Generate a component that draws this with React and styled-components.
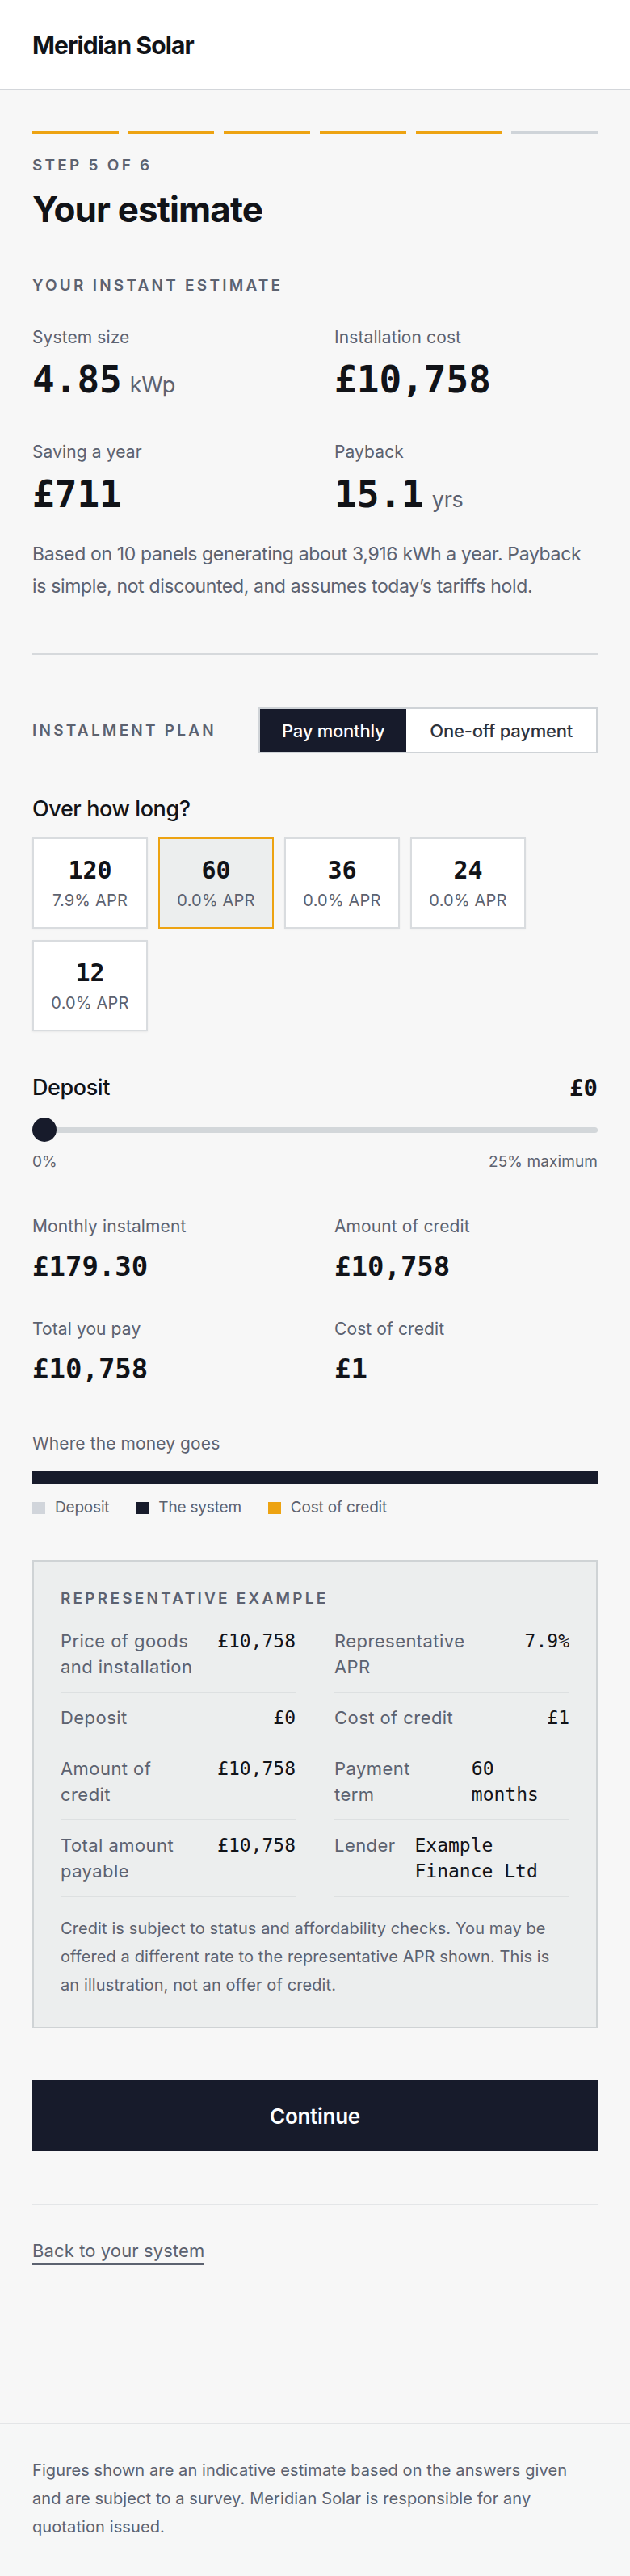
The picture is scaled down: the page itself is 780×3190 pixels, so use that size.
import React from 'react';
import styled, { createGlobalStyle } from 'styled-components';

const ink = '#171b2b';
const muted = '#5c6270';
const amber = '#eda312';
const sans = '"Inter", "Liberation Sans", sans-serif';
const mono = '"DejaVu Sans Mono", "Liberation Mono", monospace';

const GlobalStyle = createGlobalStyle`
  body {
    margin: 0;
    background: #f7f7f7;
    font-family: ${sans};
    color: ${ink};
  }
  * { box-sizing: border-box; }
`;

const terms = [
  { months: 120, apr: '7.9% APR' },
  { months: 60, apr: '0.0% APR', active: true },
  { months: 36, apr: '0.0% APR' },
  { months: 24, apr: '0.0% APR' },
  { months: 12, apr: '0.0% APR' },
];

const App = () => {
  return (
    <Page>
      <GlobalStyle />
      <Header>
        <Brand>Meridian Solar</Brand>
      </Header>

      <Main>
        <Progress>
          {[1, 2, 3, 4, 5, 6].map((n) => (
            <Segment key={n} done={n <= 5} />
          ))}
        </Progress>
        <Eyebrow>Step 5 of 6</Eyebrow>
        <Title>Your estimate</Title>

        <Eyebrow top={58}>Your instant estimate</Eyebrow>
        <StatGrid top={39} rowGap={50}>
          <Stat>
            <StatLabel>System size</StatLabel>
            <BigValue>4.85<Unit>kWp</Unit></BigValue>
          </Stat>
          <Stat>
            <StatLabel>Installation cost</StatLabel>
            <BigValue>£10,758</BigValue>
          </Stat>
          <Stat>
            <StatLabel>Saving a year</StatLabel>
            <BigValue>£711</BigValue>
          </Stat>
          <Stat>
            <StatLabel>Payback</StatLabel>
            <BigValue>15.1<Unit>yrs</Unit></BigValue>
          </Stat>
        </StatGrid>
        <Lead>
          Based on 10 panels generating about 3,916 kWh a year. Payback is simple, not
          discounted, and assumes today’s tariffs hold.
        </Lead>

        <Rule top={63} />

        <PlanRow>
          <Eyebrow top={0}>Instalment plan</Eyebrow>
          <Toggle>
            <ToggleButton active>Pay monthly</ToggleButton>
            <ToggleButton>One-off payment</ToggleButton>
          </Toggle>
        </PlanRow>

        <Question top={52}>Over how long?</Question>
        <Terms>
          {terms.map((t) => (
            <TermCard key={t.months} active={t.active}>
              <TermMonths>{t.months}</TermMonths>
              <TermApr>{t.apr}</TermApr>
            </TermCard>
          ))}
        </Terms>

        <DepositHead>
          <Question top={0}>Deposit</Question>
          <DepositValue>£0</DepositValue>
        </DepositHead>
        <Slider>
          <Track />
          <Thumb />
        </Slider>
        <SliderScale>
          <span>0%</span>
          <span>25% maximum</span>
        </SliderScale>

        <StatGrid top={54} rowGap={44}>
          <Stat gap={15}>
            <StatLabel>Monthly instalment</StatLabel>
            <MidValue>£179.30</MidValue>
          </Stat>
          <Stat gap={15}>
            <StatLabel>Amount of credit</StatLabel>
            <MidValue>£10,758</MidValue>
          </Stat>
          <Stat gap={15}>
            <StatLabel>Total you pay</StatLabel>
            <MidValue>£10,758</MidValue>
          </Stat>
          <Stat gap={15}>
            <StatLabel>Cost of credit</StatLabel>
            <MidValue>£1</MidValue>
          </Stat>
        </StatGrid>

        <StatLabel top={59}>Where the money goes</StatLabel>
        <MoneyBar>
          <BarPart color="#d1d5db" style={{ width: '0%' }} />
          <BarPart color={ink} style={{ width: '99.99%' }} />
          <BarPart color={amber} style={{ width: '0.01%' }} />
        </MoneyBar>
        <Legend>
          <LegendItem><Swatch color="#d1d5db" />Deposit</LegendItem>
          <LegendItem><Swatch color={ink} />The system</LegendItem>
          <LegendItem><Swatch color={amber} />Cost of credit</LegendItem>
        </Legend>

        <ExampleBox>
          <Eyebrow top={0}>Representative example</Eyebrow>
          <ExampleGrid>
            <ExampleRow>
              <ExLabel>Price of goods and installation</ExLabel>
              <ExValue>£10,758</ExValue>
            </ExampleRow>
            <ExampleRow>
              <ExLabel>Representative APR</ExLabel>
              <ExValue>7.9%</ExValue>
            </ExampleRow>
            <ExampleRow>
              <ExLabel>Deposit</ExLabel>
              <ExValue>£0</ExValue>
            </ExampleRow>
            <ExampleRow>
              <ExLabel>Cost of credit</ExLabel>
              <ExValue>£1</ExValue>
            </ExampleRow>
            <ExampleRow>
              <ExLabel>Amount of credit</ExLabel>
              <ExValue>£10,758</ExValue>
            </ExampleRow>
            <ExampleRow>
              <ExLabel>Payment term</ExLabel>
              <ExValue>60 months</ExValue>
            </ExampleRow>
            <ExampleRow>
              <ExLabel>Total amount payable</ExLabel>
              <ExValue>£10,758</ExValue>
            </ExampleRow>
            <ExampleRow>
              <ExLabel>Lender</ExLabel>
              <ExValue>Example Finance Ltd</ExValue>
            </ExampleRow>
          </ExampleGrid>
          <SmallPrint top={22}>
            Credit is subject to status and affordability checks. You may be offered a
            different rate to the representative APR shown. This is an illustration, not an
            offer of credit.
          </SmallPrint>
        </ExampleBox>

        <PrimaryButton>Continue</PrimaryButton>
        <Rule top={65} light />
        <BackLink href="#">Back to your system</BackLink>
      </Main>

      <Footer>
        <SmallPrint top={0}>
          Figures shown are an indicative estimate based on the answers given and are
          subject to a survey. Meridian Solar is responsible for any quotation issued.
        </SmallPrint>
      </Footer>
    </Page>
  );
};

export default App;

// LAYOUT
const Page = styled.div`
  min-height: 3190px;
  display: flex;
  flex-direction: column;
`;

const Header = styled.header`
  height: 112px;
  background: #fff;
  border-bottom: 2px solid #d3d6da;
  display: flex;
  align-items: center;
  padding: 2px 40px 0;
`;

const Brand = styled.div`
  font-size: 30px;
  font-weight: 700;
  letter-spacing: -0.03em;
  color: #111318;
`;

const Main = styled.main`
  padding: 50px 40px 190px;
  flex: 1;
`;

const Progress = styled.div`
  display: grid;
  grid-template-columns: repeat(6, 1fr);
  gap: 12px;
  margin-bottom: 28px;
`;

const Segment = styled.div`
  height: 4px;
  background: ${(p) => (p.done ? amber : '#cfd4d9')};
`;

const Eyebrow = styled.div`
  margin-top: ${(p) => p.top || 0}px;
  font-size: 19px;
  line-height: 22px;
  font-weight: 600;
  letter-spacing: 0.17em;
  text-transform: uppercase;
  color: ${muted};
`;

const Title = styled.h1`
  margin: 17px 0 0;
  font-size: 44px;
  line-height: 52px;
  font-weight: 700;
  letter-spacing: -0.02em;
  color: #111318;
`;

// STATS
const StatGrid = styled.div`
  margin-top: ${(p) => p.top}px;
  display: grid;
  grid-template-columns: 1fr 1fr;
  column-gap: 48px;
  row-gap: ${(p) => p.rowGap}px;
`;

const Stat = styled.div`
  display: flex;
  flex-direction: column;
  gap: ${(p) => p.gap || 12}px;
`;

const StatLabel = styled.div`
  margin-top: ${(p) => p.top || 0}px;
  font-size: 21px;
  line-height: 28px;
  color: ${muted};
  letter-spacing: 0.005em;
`;

const BigValue = styled.div`
  font-family: ${mono};
  font-size: 46px;
  line-height: 52px;
  height: 52px;
  font-weight: 700;
  color: #111318;
  white-space: nowrap;
`;

const Unit = styled.span`
  font-family: ${sans};
  font-size: 27px;
  line-height: 1;
  font-weight: 400;
  color: ${muted};
  margin-left: 10px;
  letter-spacing: -0.01em;
`;

const MidValue = styled.div`
  font-family: ${mono};
  font-size: 34px;
  line-height: 40px;
  font-weight: 700;
  color: #111318;
`;

const Lead = styled.p`
  margin: 28px 0 0;
  font-size: 23px;
  line-height: 40px;
  color: ${muted};
  letter-spacing: -0.015em;
`;

const Rule = styled.hr`
  margin: ${(p) => p.top}px 0 0;
  border: 0;
  height: 2px;
  background: ${(p) => (p.light ? '#e4e6e8' : '#d6d9dc')};
`;

// PLAN
const PlanRow = styled.div`
  margin-top: 65px;
  display: flex;
  align-items: center;
  justify-content: space-between;
`;

const Toggle = styled.div`
  display: flex;
  border: 2px solid #cfd3d7;
  background: #fff;
  height: 57px;
`;

const ToggleButton = styled.button`
  border: 0;
  padding: 0 ${(p) => (p.active ? 27 : 29)}px;
  font-family: ${sans};
  font-size: 22px;
  font-weight: 500;
  letter-spacing: -0.01em;
  background: ${(p) => (p.active ? ink : '#fff')};
  color: ${(p) => (p.active ? '#fff' : '#2d323c')};
  cursor: pointer;
`;

const Question = styled.div`
  margin-top: ${(p) => p.top}px;
  font-size: 27px;
  line-height: 34px;
  font-weight: 500;
  letter-spacing: -0.015em;
  color: #111318;
`;

const Terms = styled.div`
  margin-top: 18px;
  display: flex;
  flex-wrap: wrap;
  gap: 14px 13px;
`;

const TermCard = styled.div`
  width: 143px;
  height: 113px;
  display: flex;
  flex-direction: column;
  align-items: center;
  justify-content: center;
  gap: 8px;
  background: ${(p) => (p.active ? '#eceeee' : '#fff')};
  border: 2px solid ${(p) => (p.active ? amber : '#d9dcdf')};
  box-shadow: ${(p) => (p.active ? 'none' : '0 1px 2px rgba(0,0,0,0.06)')};
`;

const TermMonths = styled.div`
  font-family: ${mono};
  font-size: 30px;
  line-height: 34px;
  font-weight: 700;
  color: #111318;
`;

const TermApr = styled.div`
  font-size: 20px;
  line-height: 24px;
  color: ${muted};
  letter-spacing: 0.01em;
`;

// DEPOSIT
const DepositHead = styled.div`
  margin-top: 53px;
  display: flex;
  align-items: center;
  justify-content: space-between;
`;

const DepositValue = styled.div`
  font-family: ${mono};
  font-size: 29px;
  font-weight: 700;
  color: #111318;
`;

const Slider = styled.div`
  margin-top: 20px;
  position: relative;
  height: 30px;
  display: flex;
  align-items: center;
`;

const Track = styled.div`
  flex: 1;
  height: 7px;
  border-radius: 4px;
  background: #d3d7da;
`;

const Thumb = styled.div`
  position: absolute;
  left: 0;
  top: 0;
  width: 30px;
  height: 30px;
  border-radius: 50%;
  background: ${ink};
`;

const SliderScale = styled.div`
  margin-top: 13px;
  display: flex;
  justify-content: space-between;
  font-size: 19px;
  line-height: 24px;
  color: ${muted};
  letter-spacing: 0.005em;
`;

// MONEY
const MoneyBar = styled.div`
  margin-top: 20px;
  height: 16px;
  display: flex;
  background: ${ink};
`;

const BarPart = styled.div`
  height: 100%;
  background: ${(p) => p.color};
`;

const Legend = styled.div`
  margin-top: 17px;
  display: flex;
  gap: 33px;
`;

const LegendItem = styled.div`
  display: flex;
  align-items: center;
  gap: 12px;
  font-size: 19px;
  line-height: 24px;
  color: ${muted};
  letter-spacing: -0.01em;
`;

const Swatch = styled.span`
  width: 16px;
  height: 15px;
  background: ${(p) => p.color};
`;

// REPRESENTATIVE EXAMPLE
const ExampleBox = styled.section`
  margin-top: 53px;
  background: #eceeee;
  border: 2px solid #cfd3d5;
  padding: 35px 33px 34px;
`;

const ExampleGrid = styled.div`
  margin-top: 10px;
  display: grid;
  grid-template-columns: 1fr 1fr;
  column-gap: 48px;
`;

const ExampleRow = styled.div`
  display: flex;
  justify-content: space-between;
  align-items: flex-start;
  gap: 24px;
  padding: 15px 0;
  border-bottom: 1px solid #dde0e1;
`;

const ExLabel = styled.div`
  font-size: 22px;
  line-height: 32px;
  color: ${muted};
  letter-spacing: 0.02em;
`;

const ExValue = styled.div`
  font-family: ${mono};
  font-size: 23px;
  line-height: 32px;
  color: #111318;
`;

const SmallPrint = styled.p`
  margin: ${(p) => p.top}px 0 0;
  font-size: 20px;
  line-height: 35px;
  color: ${muted};
  letter-spacing: 0.005em;
`;

// ACTIONS
const PrimaryButton = styled.button`
  margin-top: 64px;
  width: 100%;
  height: 88px;
  border: 0;
  background: ${ink};
  color: #fff;
  font-family: ${sans};
  font-size: 26px;
  font-weight: 600;
  letter-spacing: -0.01em;
  cursor: pointer;
`;

const BackLink = styled.a`
  display: inline-block;
  margin-top: 42px;
  font-size: 22px;
  line-height: 28px;
  padding-bottom: 2px;
  color: ${muted};
  text-decoration: none;
  border-bottom: 2px solid ${muted};
  letter-spacing: 0.005em;
`;

const Footer = styled.footer`
  border-top: 2px solid #e3e5e7;
  padding: 40px 40px 43px;
  background: #f6f7f7;
`;
